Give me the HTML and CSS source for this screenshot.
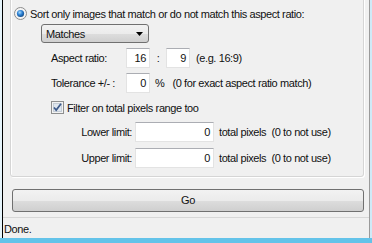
FILE: index.html
```html
<!DOCTYPE html>
<html lang="en">
<head>
    <meta charset="UTF-8">
    <title>Sort images</title>
    <link rel="stylesheet" href="styles.css">
</head>
<body>
<div class="window">
    <div class="group">
        <div class="radio-row">
            <svg class="radio" width="13" height="13" viewBox="0 0 13 13">
                <defs>
                    <radialGradient id="dot" cx="40%" cy="35%" r="70%">
                        <stop offset="0" stop-color="#a8dcfb"/>
                        <stop offset="0.5" stop-color="#2b7fd3"/>
                        <stop offset="1" stop-color="#11477f"/>
                    </radialGradient>
                </defs>
                <circle cx="6.5" cy="6.5" r="6" fill="#f4f4f4" stroke="#8c8c8c"/>
                <circle cx="6.5" cy="6.5" r="3.6" fill="url(#dot)"/>
            </svg>
            <span>Sort only images that match or do not match this aspect ratio:</span>
        </div>

        <div class="dropdown">
            <span>Matches</span>
            <svg width="7" height="4" viewBox="0 0 7 4"><path d="M0 0h7L3.5 4z" fill="#000"/></svg>
        </div>

        <div class="row">
            <span class="label">Aspect ratio:</span>
            <div class="field small">16</div>
            <span class="colon">:</span>
            <div class="field small">9</div>
            <span class="hint">(e.g. 16:9)</span>
        </div>

        <div class="row">
            <span class="label">Tolerance +/- :</span>
            <div class="field small">0</div>
            <span class="pct">%</span>
            <span class="hint wide">(0 for exact aspect ratio match)</span>
        </div>

        <div class="check-row">
            <svg class="check" width="13" height="13" viewBox="0 0 13 13">
                <rect x="0.5" y="0.5" width="12" height="12" fill="#f2f2f2" stroke="#8e8f8f"/>
                <rect x="2.5" y="2.5" width="8" height="8" fill="#dfe6ee" stroke="#c5cdd6"/>
                <path d="M3 6.5l2.2 2.6L10 2.8" fill="none" stroke="#3d5a8a" stroke-width="1.7"/>
            </svg>
            <span>Filter on total pixels range too</span>
        </div>

        <div class="row limit">
            <span class="limit-label">Lower limit:</span>
            <div class="field big">0</div>
            <span class="unit">total pixels&nbsp; (0 to not use)</span>
        </div>

        <div class="row limit next">
            <span class="limit-label">Upper limit:</span>
            <div class="field big">0</div>
            <span class="unit">total pixels&nbsp; (0 to not use)</span>
        </div>
    </div>

    <div class="go-btn">Go</div>

    <div class="status">Done.</div>
</div>
</body>
</html>
```

FILE: styles.css
```css
body {
    margin: 0;
    background-color: #63c3e9;
    font-family: "Liberation Sans", Arial, sans-serif;
    font-size: 11px;
    letter-spacing: -0.4px;
    color: #111;
    overflow: hidden;
}
.window {
    width: 366px;
    height: 238px;
    margin-left: 2px;
    background-color: #f0f0f0;
    border-left: 1px solid #000;
    border-right: 1px solid #9a9a9a;
    box-shadow: -2px 0 0 #e6f4fb, 2px 0 0 #cfeaf7;
    overflow: hidden;
}
.group {
    box-sizing: border-box;
    width: 354px;
    height: 187px;
    margin: -10px 0 0 7px;
    padding-top: 16px;
    border: 1px solid #d5d5d5;
    border-radius: 3px;
    box-shadow: inset 1px 1px 0 #fff, 1px 1px 0 #fff;
}
.radio-row {
    display: flex;
    align-items: center;
    height: 13px;
    padding-left: 3px;
}
.radio {
    margin-right: 3px;
}
.dropdown {
    box-sizing: border-box;
    display: flex;
    align-items: center;
    justify-content: space-between;
    width: 108px;
    height: 19px;
    margin: 4px 0 0 30px;
    padding: 0 5px 0 4px;
    border: 1px solid #707070;
    border-radius: 3px;
    background: linear-gradient(#f2f2f2, #ebebeb 50%, #dddddd 51%, #cfcfcf);
}
.row {
    display: flex;
    align-items: center;
    height: 20px;
    margin-top: 5px;
    padding-left: 40px;
}
.label {
    width: 75px;
}
.field {
    box-sizing: border-box;
    height: 20px;
    padding: 0 3px;
    line-height: 18px;
    text-align: right;
    background-color: #fff;
    border: 1px solid #e3e3e3;
    border-top-color: #abadb3;
}
.small {
    width: 24px;
}
.colon {
    width: 16px;
    text-align: center;
}
.pct {
    margin-left: 5px;
}
.hint {
    margin-left: 6px;
}
.hint.wide {
    margin-left: 8px;
}
.check-row {
    display: flex;
    align-items: center;
    height: 13px;
    margin-top: 8px;
    padding-left: 40px;
}
.check {
    margin-right: 3px;
}
.limit {
    margin-top: 8px;
    padding-left: 0;
}
.limit.next {
    margin-top: 6px;
}
.limit-label {
    width: 121px;
    text-align: right;
}
.big {
    width: 79px;
    margin-left: 3px;
}
.unit {
    margin-left: 5px;
}
.go-btn {
    box-sizing: border-box;
    width: 352px;
    height: 23px;
    margin: 12px 0 0 9px;
    line-height: 21px;
    text-align: center;
    border: 1px solid #707070;
    border-radius: 3px;
    background: linear-gradient(#f2f2f2, #ebebeb 50%, #dddddd 51%, #cfcfcf);
}
.status {
    height: 20px;
    margin-top: 5px;
    padding-left: 1px;
    line-height: 22px;
    border-top: 1px solid #d7d7d7;
    background-color: #f0f0f0;
}
```
